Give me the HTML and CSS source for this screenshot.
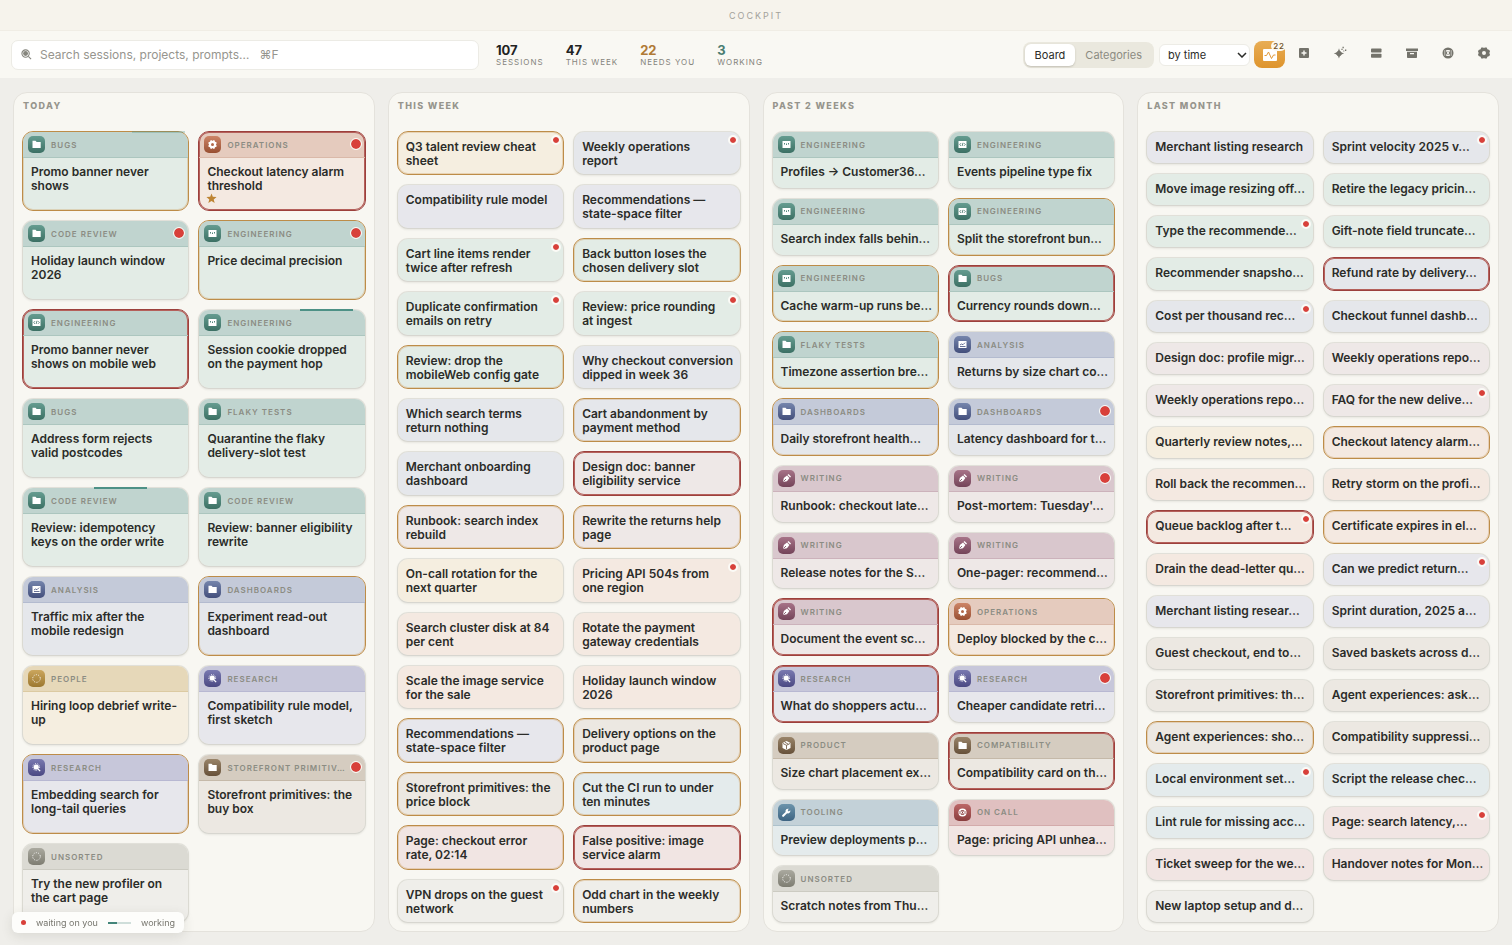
FILE: index.html
```html
<!DOCTYPE html>
<html lang="en">
<head>
<meta charset="utf-8">
<meta name="viewport" content="width=device-width, initial-scale=1">
<title>Cockpit</title>
<link rel="stylesheet" href="styles.css">
</head>
<body>
<svg class="sprite" aria-hidden="true">
  <symbol id="i-folder" viewBox="0 0 17 17"><path d="M4.500 4.800h3l1.200 1.200h4v6h-8.200z"/></symbol>
  <symbol id="i-code" viewBox="0 0 17 17"><path fill-rule="evenodd" d="M4.500 5h8v7h-8zM6 7v1.600h1V7zM8 7.600v1.400h1V7.600zM10 7v1.600h1V7z"/></symbol>
  <symbol id="i-brackets" viewBox="0 0 17 17"><path d="M4.500 5h8v7h-8z"/><path class="cut" d="M7 7.200 5.700 8.500 7 9.800M10 7.200l1.300 1.300L10 9.800M9 6.800 8.100 10"/></symbol>
  <symbol id="i-cog" viewBox="0 0 17 17"><path fill-rule="evenodd" d="M6.500 4.300h1.300l.7.700.7-.7h1.300l.5 1.500 1.500.5v1.500l-.6.700.6.700v1.500l-1.500.5-.5 1.500H9.200l-.7-.7-.7.700H6.500L6 11.200l-1.500-.5V9.200l.6-.7-.6-.7V6.300L6 5.800zM8.500 7a1.500 1.500 0 1 0 0 3 1.500 1.500 0 0 0 0-3z"/></symbol>
  <symbol id="i-chart" viewBox="0 0 17 17"><path d="M4.500 5h8v7h-8z"/><path class="cut" d="M6 10.500h5.500M6 9l1.500-1 1.500.7 2-2"/></symbol>
  <symbol id="i-dashed" viewBox="0 0 17 17"><circle class="dash" cx="8.500" cy="8.500" r="3.800"/></symbol>
  <symbol id="i-lens" viewBox="0 0 17 17"><circle cx="8.200" cy="8" r="2.600"/><circle class="dash" cx="8.200" cy="8" r="3.400"/><path class="line" d="m10 10 2.200 2.200"/></symbol>
  <symbol id="i-pen" viewBox="0 0 17 17"><path d="m5 12 .8-4L9 5.600 11.400 8 9 11.200z"/><path d="m9.500 4.900 1-.9 2.500 2.500-.9 1z"/><path class="cut" d="m5.400 11.600 2.600-2.600"/></symbol>
  <symbol id="i-box" viewBox="0 0 17 17"><path d="m8.500 4 4 2v5l-4 2-4-2V6z"/><path class="cut" d="m5 6.500 3.500 1.800L12 6.500M8.500 8.300v4M6.800 5.200l3.400 1.900"/></symbol>
  <symbol id="i-wrench" viewBox="0 0 17 17"><path d="M12.300 6.300 10.800 7.400 9.700 6.300l1.100-1.500a2.500 2.500 0 0 0-3.200 3.100L4.400 11a1 1 0 0 0 1.500 1.500l3.200-3.200a2.500 2.500 0 0 0 3.200-3z"/></symbol>
  <symbol id="i-phone" viewBox="0 0 17 17"><circle cx="8.500" cy="8.500" r="4"/><path class="cut" d="M7.200 6.500h2.600L7.200 10.500h2.600zM6 7v3M11 7v3"/></symbol>
  <symbol id="i-star" viewBox="0 0 10 10"><path d="m5 .4 1.200 3.100 3.400.2-2.600 2.100.9 3.300L5 7.300 2.100 9.100 3 5.800.4 3.700l3.400-.2z"/></symbol>
</svg>

<header class="titlebar">COCKPIT</header>

<nav class="toolbar">
  <label class="search">
    <svg class="search-icon" viewBox="0 0 12 12" aria-hidden="true"><circle class="ring" cx="5" cy="5" r="4"/><circle cx="5" cy="5" r="2.700"/><path class="ring" d="m8 8 3 3"/></svg>
    <input type="search" aria-label="Search sessions" placeholder="Search sessions, projects, prompts… &nbsp; ⌘F">
  </label>
  <dl class="stats">
    <div><dd>107</dd><dt>SESSIONS</dt></div>
    <div><dd>47</dd><dt>THIS WEEK</dt></div>
    <div class="needs"><dd>22</dd><dt>NEEDS YOU</dt></div>
    <div class="working"><dd>3</dd><dt>WORKING</dt></div>
  </dl>
  <div class="controls">
    <div class="segmented">
      <button type="button" class="on" aria-pressed="true">Board</button>
      <button type="button" aria-pressed="false">Categories</button>
    </div>
    <div class="sort">
      <select aria-label="Sort sessions"><option>by time</option></select>
      <svg viewBox="0 0 10 6" aria-hidden="true"><path d="m1 1 4 4 4-4"/></svg>
    </div>
    <button type="button" class="pulse" aria-label="Needs you">
      <svg viewBox="0 0 16 14" aria-hidden="true"><path class="screen" d="M1 2a1 1 0 0 1 1-1h12a1 1 0 0 1 1 1v10a1 1 0 0 1-1 1H2a1 1 0 0 1-1-1z"/><path class="wave" d="M2.500 7.500h2L6.500 4l3 6.500 2-3.500h2"/></svg>
      <span class="count">22</span>
    </button>
    <div class="tools">
      <button type="button" aria-label="New session"><svg viewBox="0 0 14 14"><path fill-rule="evenodd" d="M3 2h8a1 1 0 0 1 1 1v8a1 1 0 0 1-1 1H3a1 1 0 0 1-1-1V3a1 1 0 0 1 1-1zm3.300 2.500v1.800H4.500v1.400h1.800v1.800h1.400V7.700h1.800V6.300H7.700V4.500z"/></svg></button>
      <button type="button" aria-label="Suggest"><svg viewBox="0 0 14 14"><path d="M6 2.200c.7 3 1.800 4.400 5.200 5.200C7.800 8.200 6.700 9.600 6 12.600 5.300 9.600 4.200 8.200.8 7.400 4.200 6.600 5.300 5.200 6 2.200z"/><circle cx="6" cy="7.400" r="2.500"/><path d="M9.500.8h1.300v1.400H9.500zM8.400 2.800h1.200V4H8.400zM12 3.600h1.300v1.300H12zM10.300 4.400h1v1h-1z"/></svg></button>
      <button type="button" aria-label="Rows"><svg viewBox="0 0 14 14"><rect x="2" y="2.500" width="10.500" height="4" rx=".8"/><rect x="2" y="7.800" width="10.500" height="4" rx=".8"/></svg></button>
      <button type="button" aria-label="Archive"><svg viewBox="0 0 14 14"><path fill-rule="evenodd" d="M1 2.500h12V5H1zM2 5.800h10v5.400a.8.800 0 0 1-.8.800H2.800a.8.800 0 0 1-.8-.8zM5 7v1.200h4V7z"/></svg></button>
      <button type="button" aria-label="Account"><svg viewBox="0 0 14 14"><circle cx="7" cy="7" r="5.500"/><path class="hole" d="M3.800 4.200v5.600M10.200 4.200v5.600"/><path class="light" d="M5.200 4h3.600v1.200L7.600 6.900l1.200 1.800V10H5.200V8.700l1.200-1.800-1.200-1.700z"/><path d="M6.300 5h1.400L7 6.100zM6.200 9l.8-1.200.8 1.200z"/></svg></button>
      <button type="button" aria-label="Settings"><svg viewBox="0 0 14 14"><path fill-rule="evenodd" d="M4.300 1.500h2l.7.700.7-.7h2l.7 1.800 2 .7.600 1.800-.8 1.200.8 1.200-.6 1.800-2 .7-.7 1.800h-2l-.7-.7-.7.700h-2l-.7-1.800-2-.7L1 8.200 1.800 7 1 5.800 1.600 4l2-.7zM7 5a2 2 0 1 0 0 4 2 2 0 0 0 0-4z"/></svg></button>
    </div>
  </div>
</nav>

<main class="board" id="board"></main>

<footer class="legend">
  <span class="legend-dot"></span><span>waiting on you</span>
  <span class="legend-line"></span><span>working</span>
</footer>
<script src="app.js"></script>
</body>
</html>
```
FILE: styles.css
```css
* { box-sizing: border-box; }

html, body { height: 100%; }

body {
  margin: 0;
  display: flex;
  flex-direction: column;
  background: #efeeea;
  color: #2b2c29;
  font-family: Inter, "Noto Sans", "DejaVu Sans", sans-serif;
}

button, input, select { font: inherit; color: inherit; }

.sprite { display: none; }

.titlebar {
  flex: none;
  height: 31px;
  border-bottom: 1px solid #f0ede5;
  background: #f6f3ec;
  color: #a3a29b;
  font-size: 9px;
  line-height: 31px;
  letter-spacing: 2px;
  text-align: center;
}

.toolbar {
  flex: none;
  display: flex;
  align-items: center;
  height: 47px;
  padding: 0 14px 0 11px;
  background: #f9f8f3;
}

.search {
  flex: 0 1 468px;
  display: flex;
  align-items: center;
  gap: 8px;
  height: 30px;
  padding: 0 9px;
  border: 1px solid #ecebe5;
  border-radius: 7px;
  background: #fff;
}

.search-icon { width: 11px; height: 11px; fill: #85857d; }
.search-icon .ring { fill: none; stroke: #85857d; stroke-width: 1.200; }

.search input {
  flex: 1;
  min-width: 0;
  padding: 0;
  border: 0;
  outline: 0;
  background: none;
  font-size: 12px;
}
.search input::placeholder { color: #96958e; opacity: 1; }

.stats {
  display: flex;
  gap: 22px;
  margin: 0 0 0 17px;
}
.stats div { display: flex; flex-direction: column; }
.stats dd { margin: 0; font-size: 13px; font-weight: 700; line-height: 14px; color: #22231f; }
.stats dt { font-size: 8px; line-height: 10px; letter-spacing: 1px; color: #85847c; }
.stats .needs dd { color: #b07a35; }
.stats .working dd { color: #4a7d72; }

.controls { display: flex; align-items: center; margin-left: auto; }

.segmented {
  display: flex;
  padding: 2px;
  border-radius: 8px;
  background: #eae8de;
}
.segmented button {
  height: 22px;
  padding: 0 10px;
  border: 0;
  border-radius: 6px;
  background: none;
  color: #8c8b82;
  font-size: 11px;
}
.segmented .on {
  background: #fff;
  color: #2b2c29;
  box-shadow: 0 1px 2px rgb(60 55 40 / 22%);
}

.sort { position: relative; margin-left: 5px; }
.sort select {
  appearance: none;
  display: block;
  width: 91px;
  height: 22px;
  padding: 0 20px 0 8px;
  border: 1px solid #edece6;
  border-radius: 6px;
  background: #fff;
  font-size: 11px;
}
.sort svg {
  position: absolute;
  top: 8px;
  right: 3px;
  width: 10px;
  height: 6px;
  fill: none;
  stroke: #2b2c29;
  stroke-width: 1.500;
  pointer-events: none;
}

.pulse {
  position: relative;
  display: grid;
  place-items: center;
  width: 31px;
  height: 27px;
  margin-left: 4px;
  padding: 0;
  border: 0;
  border-radius: 8px;
  background: linear-gradient(#e8ad55, #de942c);
}
.pulse svg { width: 16px; height: 14px; }
.pulse .screen { fill: #fff; }
.pulse .wave { fill: none; stroke: #e0993a; stroke-width: 1; }
.count {
  position: absolute;
  top: 0;
  right: -1px;
  padding: 0 1px 0 2px;
  border-radius: 5px;
  background: #fbf8ef;
  color: #6d5028;
  font-size: 8px;
  font-weight: 500;
  line-height: 10px;
  letter-spacing: 1px;
}

.tools { display: flex; gap: 8px; margin-left: 5px; }
.tools button {
  display: grid;
  place-items: center;
  width: 28px;
  height: 28px;
  padding: 0 0 3px;
  border: 0;
  background: none;
}
.tools svg { width: 14px; height: 14px; fill: #74736b; }
.tools .light { fill: #f9f8f3; }
.tools .hole { fill: none; stroke: #f9f8f3; stroke-width: .600; }

.board {
  flex: 1;
  min-height: 0;
  display: grid;
  grid-template-columns: repeat(4, minmax(0, 1fr));
  gap: 13px;
  padding: 14px 13px 13px;
}

.column {
  display: flex;
  flex-direction: column;
  min-height: 0;
  padding: 0 8px 8px;
  border: 1px solid #e4e2dc;
  border-radius: 14px;
  background: #f8f7f2;
}
.column h2 {
  flex: none;
  height: 38px;
  margin: 0;
  padding: 7px 1px 0;
  color: #96958d;
  font-size: 9px;
  font-weight: 800;
  line-height: 12px;
  letter-spacing: .15em;
}

.cards {
  flex: 1;
  min-height: 0;
  display: grid;
  grid-template-columns: repeat(2, minmax(0, 1fr));
  grid-auto-rows: minmax(0, 1fr);
  gap: 9px;
}

.card {
  position: relative;
  border: 1px solid rgb(70 65 50 / 10%);
  border-radius: 11px;
  background: var(--body);
  background-clip: padding-box;
  box-shadow: 0 1px 2px rgb(70 65 50 / 9%);
}
.card.gold { border-color: #bd8c48; box-shadow: inset 0 0 0 1px rgb(201 150 78 / 30%); }
.card.red { border-color: #9c403c; box-shadow: inset 0 0 0 1px #b5605b; }

.card header {
  display: flex;
  align-items: center;
  gap: 6px;
  height: 26px;
  padding: 0 18px 0 5px;
  border-bottom: 1px solid var(--line);
  border-radius: 10px 10px 0 0;
  background: var(--head);
}
.card.red header { box-shadow: inset 0 1px #b5605b, inset 1px 0 #b5605b, inset -1px 0 #b5605b; }

.badge {
  flex: none;
  width: 17px;
  height: 17px;
  border-radius: 5px;
  background: linear-gradient(var(--top), var(--deep));
  fill: #fff;
}
.badge use { color: var(--deep); }
.cut { fill: none; stroke: currentColor; stroke-width: .800; }
.line { fill: none; stroke: #fff; stroke-width: 1.200; }
.dash { fill: none; stroke: #fff; stroke-width: 1; stroke-dasharray: 1 1.400; }

.category {
  color: #8b8c83;
  font-size: 8px;
  font-weight: 600;
  line-height: 12px;
  letter-spacing: 1px;
  white-space: nowrap;
}

.title {
  margin: 0;
  padding: 8px 4px 0 8px;
  font-size: 12px;
  font-weight: 600;
  line-height: 14px;
}
header + .title { padding-top: 7px; }
.small .title.waits { padding-right: 18px; }
.single .title { padding-right: 0; white-space: nowrap; }

.dot {
  position: absolute;
  top: 3px;
  right: 2px;
  width: 10px;
  height: 10px;
  border: 2px solid #fbfaf6;
  border-radius: 50%;
  background: #d8403a;
  background-clip: padding-box;
}
.large .dot { top: 6px; right: 3px; width: 12px; height: 12px; border-width: 1px; }

.star { display: block; width: 11px; height: 11px; margin: 0 0 0 7px; fill: #bd8433; }

.progress {
  position: absolute;
  top: -1px;
  width: 32%;
  height: 2px;
  background: #4d9186;
}
.gold .progress { opacity: .3; }

.green { --head: #c0d4cf; --line: #acc6bf; --body: #e3ece6; --top: #659c90; --deep: #3c7064; }
.blue { --head: #c4cad9; --line: #b3bbcf; --body: #e5e7eb; --top: #7585ac; --deep: #434f7c; }
.violet { --head: #c7c7da; --line: #b8b8d2; --body: #e7e7ec; --top: #7979b0; --deep: #4b4983; }
.amber { --head: #e6d8b9; --line: #dccaa2; --body: #f5eee0; --top: #cba65d; --deep: #9c7830; }
.plum { --head: #d9c7cd; --line: #ccb2bb; --body: #eee8e7; --top: #a77388; --deep: #744459; }
.rust { --head: #e5cbbe; --line: #dab9a9; --body: #f4e9e1; --top: #cd8567; --deep: #984f32; }
.brown { --head: #d5ccc0; --line: #c5b9a9; --body: #ece8e2; --top: #998469; --deep: #67513a; }
.steel { --head: #c3d1d8; --line: #adc1cb; --body: #e4ebec; --top: #6c94ac; --deep: #3e6482; }
.rose { --head: #e0c0c0; --line: #d3abab; --body: #f1e5e3; --top: #bc6767; --deep: #893d3d; }
.grey { --head: #dbdad3; --line: #cccbc2; --body: #efeeea; --top: #aaa99f; --deep: #7e7d72; }

.legend {
  position: fixed;
  left: 12px;
  bottom: 12px;
  display: flex;
  align-items: center;
  gap: 10px;
  height: 21px;
  padding: 0 9px;
  border-radius: 6px;
  background: #fdfdfb;
  box-shadow: 0 3px 12px rgb(60 55 40 / 12%);
  color: #77766e;
  font-size: 9px;
}
.legend-dot { width: 5px; height: 5px; border-radius: 50%; background: #d8403a; }
.legend-line { width: 23px; height: 2px; background: linear-gradient(90deg, #43857a 40%, #cfdeda 40%); }
```
FILE: app.js
```js
// Card fields: colour, title, flags, category, icon, progress offset in percent.
// Flags: g = gold ring, r = red ring, w = waiting on you, s = starred.
const columns = [
  { name: "TODAY", kind: "large", cards: [
    ["green", "Promo banner never shows", "g", "BUGS", "folder", 66],
    ["rust", "Checkout latency alarm threshold", "rws", "OPERATIONS", "cog"],
    ["green", "Holiday launch window 2026", "w", "CODE REVIEW", "folder"],
    ["green", "Price decimal precision", "gw", "ENGINEERING", "code"],
    ["green", "Promo banner never shows on mobile web", "r", "ENGINEERING", "brackets"],
    ["green", "Session cookie dropped on the payment hop", "", "ENGINEERING", "code", 61],
    ["green", "Address form rejects<br>valid postcodes", "", "BUGS", "folder"],
    ["green", "Quarantine the flaky delivery-slot test", "", "FLAKY TESTS", "folder"],
    ["green", "Review: idempotency keys on the order write", "", "CODE REVIEW", "folder", 43],
    ["green", "Review: banner eligibility rewrite", "", "CODE REVIEW", "folder"],
    ["blue", "Traffic mix after the mobile redesign", "", "ANALYSIS", "chart"],
    ["blue", "Experiment read-out dashboard", "g", "DASHBOARDS", "folder"],
    ["amber", "Hiring loop debrief write-up", "", "PEOPLE", "dashed"],
    ["violet", "Compatibility rule model, first sketch", "", "RESEARCH", "lens"],
    ["violet", "Embedding search for long-tail queries", "g", "RESEARCH", "lens"],
    ["brown", "Storefront primitives: the buy box", "w", "STOREFRONT PRIMITIV…", "folder"],
    ["grey", "Try the new profiler on<br>the cart page", "", "UNSORTED", "dashed"],
  ] },
  { name: "THIS WEEK", kind: "small", cards: [
    ["amber", "Q3 talent review cheat sheet", "gw"],
    ["blue", "Weekly operations report", "w"],
    ["violet", "Compatibility rule model", ""],
    ["violet", "Recommendations — state-space filter", ""],
    ["green", "Cart line items render twice after refresh", "w"],
    ["green", "Back button loses the chosen delivery slot", "g"],
    ["green", "Duplicate confirmation emails on retry", "w"],
    ["green", "Review: price rounding at ingest", "w"],
    ["green", "Review: drop the mobileWeb config gate", "g"],
    ["blue", "Why checkout conversion dipped in week 36", ""],
    ["blue", "Which search terms return nothing", ""],
    ["blue", "Cart abandonment by payment method", "g"],
    ["blue", "Merchant onboarding dashboard", ""],
    ["plum", "Design doc: banner eligibility service", "r"],
    ["plum", "Runbook: search index rebuild", "g"],
    ["plum", "Rewrite the returns help page", "g"],
    ["amber", "On-call rotation for the next quarter", ""],
    ["rust", "Pricing API 504s from one region", "w"],
    ["rust", "Search cluster disk at 84 per cent", ""],
    ["rust", "Rotate the payment gateway credentials", ""],
    ["rust", "Scale the image service for the sale", ""],
    ["rust", "Holiday launch window 2026", ""],
    ["violet", "Recommendations — state-space filter", "g"],
    ["brown", "Delivery options on the product page", "g"],
    ["brown", "Storefront primitives: the price block", "g"],
    ["steel", "Cut the CI run to under<br>ten minutes", "g"],
    ["rose", "Page: checkout error<br>rate, 02:14", "g"],
    ["rose", "False positive: image service alarm", "r"],
    ["grey", "VPN drops on the guest network", "w"],
    ["grey", "Odd chart in the weekly numbers", "g"],
  ] },
  { name: "PAST 2 WEEKS", kind: "large single", cards: [
    ["green", "Profiles → Customer36…", "", "ENGINEERING", "code"],
    ["green", "Events pipeline type fix", "", "ENGINEERING", "brackets"],
    ["green", "Search index falls behin…", "", "ENGINEERING", "code"],
    ["green", "Split the storefront bun…", "g", "ENGINEERING", "brackets"],
    ["green", "Cache warm-up runs be…", "g", "ENGINEERING", "code"],
    ["green", "Currency rounds down…", "r", "BUGS", "folder"],
    ["green", "Timezone assertion bre…", "g", "FLAKY TESTS", "folder"],
    ["blue", "Returns by size chart co…", "", "ANALYSIS", "chart"],
    ["blue", "Daily storefront health…", "g", "DASHBOARDS", "folder"],
    ["blue", "Latency dashboard for t…", "w", "DASHBOARDS", "folder"],
    ["plum", "Runbook: checkout late…", "", "WRITING", "pen"],
    ["plum", "Post-mortem: Tuesday'…", "w", "WRITING", "pen"],
    ["plum", "Release notes for the S…", "", "WRITING", "pen"],
    ["plum", "One-pager: recommend…", "", "WRITING", "pen"],
    ["plum", "Document the event sc…", "r", "WRITING", "pen"],
    ["rust", "Deploy blocked by the c…", "g", "OPERATIONS", "cog"],
    ["violet", "What do shoppers actu…", "r", "RESEARCH", "lens"],
    ["violet", "Cheaper candidate retri…", "w", "RESEARCH", "lens"],
    ["brown", "Size chart placement ex…", "", "PRODUCT", "box"],
    ["brown", "Compatibility card on th…", "r", "COMPATIBILITY", "folder"],
    ["steel", "Preview deployments p…", "", "TOOLING", "wrench"],
    ["rose", "Page: pricing API unhea…", "", "ON CALL", "phone"],
    ["grey", "Scratch notes from Thu…", "", "UNSORTED", "dashed"],
  ] },
  { name: "LAST MONTH", kind: "small single", cards: [
    ["violet", "Merchant listing research", ""],
    ["blue", "Sprint velocity 2025 v…", "w"],
    ["green", "Move image resizing off…", ""],
    ["green", "Retire the legacy pricin…", ""],
    ["green", "Type the recommende…", "w"],
    ["green", "Gift-note field truncate…", ""],
    ["green", "Recommender snapsho…", ""],
    ["blue", "Refund rate by delivery…", "r"],
    ["blue", "Cost per thousand rec…", "w"],
    ["blue", "Checkout funnel dashb…", ""],
    ["plum", "Design doc: profile migr…", ""],
    ["plum", "Weekly operations repo…", ""],
    ["plum", "Weekly operations repo…", ""],
    ["plum", "FAQ for the new delive…", "w"],
    ["amber", "Quarterly review notes,…", ""],
    ["rust", "Checkout latency alarm…", "g"],
    ["rust", "Roll back the recommen…", ""],
    ["rust", "Retry storm on the profi…", ""],
    ["rust", "Queue backlog after t…", "rw"],
    ["rust", "Certificate expires in el…", "g"],
    ["rust", "Drain the dead-letter qu…", ""],
    ["violet", "Can we predict return…", "w"],
    ["violet", "Merchant listing resear…", ""],
    ["violet", "Sprint duration, 2025 a…", ""],
    ["brown", "Guest checkout, end to…", ""],
    ["brown", "Saved baskets across d…", ""],
    ["brown", "Storefront primitives: th…", ""],
    ["brown", "Agent experiences: ask…", ""],
    ["brown", "Agent experiences: sho…", "g"],
    ["brown", "Compatibility suppressi…", ""],
    ["steel", "Local environment set…", "w"],
    ["steel", "Script the release chec…", ""],
    ["steel", "Lint rule for missing acc…", ""],
    ["rose", "Page: search latency,…", "w"],
    ["rose", "Ticket sweep for the we…", ""],
    ["rose", "Handover notes for Mon…", ""],
    ["grey", "New laptop setup and d…", ""],
  ] },
];

function cardHtml([tone, title, flags, category, icon, progress]) {
  const ring = flags.includes("g") ? "gold" : flags.includes("r") ? "red" : "";
  const waits = flags.includes("w");
  const head = category
    ? `<header><svg class="badge" aria-hidden="true"><use href="#i-${icon}"/></svg><span class="category">${category}</span></header>`
    : "";
  return `<article class="card ${tone} ${ring}">${head}
    <h3 class="title ${waits ? "waits" : ""}">${title}</h3>
    ${flags.includes("s") ? '<svg class="star" aria-label="Starred"><use href="#i-star"/></svg>' : ""}
    ${waits ? '<span class="dot"></span>' : ""}
    ${progress ? `<span class="progress" style="left:${progress}%"></span>` : ""}
  </article>`;
}

document.getElementById("board").innerHTML = columns.map(({ name, kind, cards }) =>
  `<section class="column"><h2>${name}</h2><div class="cards ${kind}">${cards.map(cardHtml).join("")}</div></section>`
).join("");
```
